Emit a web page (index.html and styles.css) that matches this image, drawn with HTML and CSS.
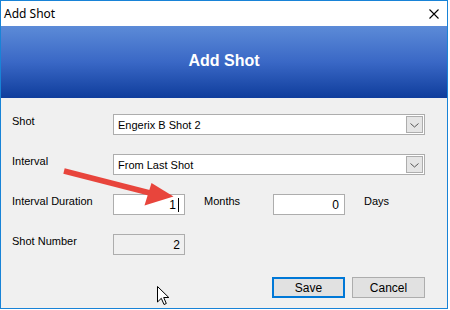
FILE: index.html
```html
<!DOCTYPE html>
<html>
<head>
<meta charset="utf-8">
<link rel="stylesheet" href="styles.css">
</head>
<body>
<div class="window">
  <div class="titlebar">
    <span class="title">Add Shot</span>
    <svg class="close" width="10" height="10" viewBox="0 0 10 10"><path d="M0.5 0.5 L9.5 9.5 M9.5 0.5 L0.5 9.5" stroke="#000" stroke-width="1.1" fill="none"/></svg>
  </div>
  <div class="header">Add Shot</div>
  <div class="content">
    <div class="row">
      <div class="label">Shot</div>
      <div class="combo"><span class="combo-text">Engerix B Shot 2</span><span class="dd"><svg width="9" height="5" viewBox="0 0 9 5"><path d="M0.5 0.5 L4.5 4 L8.5 0.5" stroke="#555" fill="none" stroke-width="1"/></svg></span></div>
    </div>
    <div class="row">
      <div class="label">Interval</div>
      <div class="combo"><span class="combo-text">From Last Shot</span><span class="dd"><svg width="9" height="5" viewBox="0 0 9 5"><path d="M0.5 0.5 L4.5 4 L8.5 0.5" stroke="#555" fill="none" stroke-width="1"/></svg></span></div>
    </div>
    <div class="row">
      <div class="label">Interval Duration</div>
      <div class="textbox">1<span class="caret"></span></div>
      <div class="label unit-months">Months</div>
      <div class="textbox pad">0</div>
      <div class="label unit-days">Days</div>
    </div>
    <div class="row">
      <div class="label">Shot Number</div>
      <div class="textbox readonly">2</div>
    </div>
    <div class="buttons">
      <div class="btn primary">Save</div>
      <div class="btn">Cancel</div>
    </div>
  </div>
  <svg class="arrow" width="450" height="310" viewBox="0 0 450 310">
    <line x1="64" y1="171" x2="150" y2="193" stroke="#e8453c" stroke-width="5.5"/>
    <polygon points="151.5,183 173.5,196.5 144.5,205.5" fill="#e8453c"/>
  </svg>
  <svg class="cursor" width="14" height="21" viewBox="0 0 14 21">
    <polygon points="0.5,0.5 0.5,16 4.3,12.3 7,18.5 9.3,17.5 6.7,11.5 11.8,11.5" fill="#fff" stroke="#000" stroke-width="1" stroke-linejoin="miter"/>
  </svg>
</div>
</body>
</html>
```

FILE: styles.css
```css
html, body {
  margin: 0;
  padding: 0;
  background: #ffffff;
}

.window {
  position: relative;
  width: 446px;
  height: 307px;
  border: 1px solid #1883d7;
  background: #f0f0f0;
  font-family: "Liberation Sans", Arial, sans-serif;
  font-size: 11px;
  color: #000;
}

.titlebar {
  height: 25px;
  background: #ffffff;
  display: flex;
  align-items: center;
  justify-content: space-between;
  padding: 0 8px 0 3px;
}

.title {
  font-family: "Noto Sans", "Open Sans", sans-serif;
  font-size: 12px;
  color: #000;
  margin-top: -1px;
}

.close {
  display: block;
  margin-top: 1px;
}

.header {
  height: 69px;
  padding-bottom: 3px;
  background: linear-gradient(to bottom, #5c8bd8 0%, #3a68c6 50%, #0f3d9c 100%);
  display: flex;
  align-items: center;
  justify-content: center;
  color: #ffffff;
  font-family: "Liberation Sans", Arial, sans-serif;
  font-weight: bold;
  font-size: 16px;
}

.content {
  padding: 16px 22px 0 11px;
}

.row {
  display: flex;
  height: 21px;
  margin-bottom: 19px;
}

.label {
  width: 101px;
  padding-top: 1px;
  line-height: 13px;
  white-space: nowrap;
}

.combo {
  width: 310px;
  height: 19px;
  border: 1px solid #adadad;
  background: #ffffff;
  display: flex;
  align-items: center;
  justify-content: space-between;
}

.combo-text {
  padding-left: 4px;
  font-size: 11px;
}

.dd {
  width: 15px;
  height: 15px;
  margin-right: 1px;
  border: 1px solid #adadad;
  background: #e5e5e5;
  display: flex;
  align-items: center;
  justify-content: center;
}

.dd svg {
  display: block;
  margin-top: 1px;
}

.textbox {
  width: 65px;
  height: 19px;
  border: 1px solid #adadad;
  background: #ffffff;
  display: flex;
  align-items: center;
  justify-content: flex-end;
  padding-right: 5px;
  font-size: 12px;
}

.textbox.pad {
  padding-right: 5px;
}

.textbox.readonly {
  background: #f0f0f0;
  padding-right: 4px;
  width: 66px;
}

.caret {
  display: inline-block;
  width: 1px;
  height: 14px;
  background: #000;
  margin-left: 2px;
}

.unit-months {
  width: 69px;
  margin-left: 19px;
}

.unit-days {
  width: auto;
  margin-left: 19px;
}

.buttons {
  display: flex;
  justify-content: flex-end;
  gap: 7px;
  margin-top: 22px;
}

.btn {
  width: 71px;
  height: 19px;
  border: 1px solid #adadad;
  background: #e1e1e1;
  display: flex;
  align-items: center;
  justify-content: center;
  font-size: 12px;
}

.btn.primary {
  width: 69px;
  height: 17px;
  border: 2px solid #0078d7;
}

.arrow {
  position: absolute;
  left: -1px;
  top: -1px;
  pointer-events: none;
}

.cursor {
  position: absolute;
  left: 156px;
  top: 285px;
}
```
